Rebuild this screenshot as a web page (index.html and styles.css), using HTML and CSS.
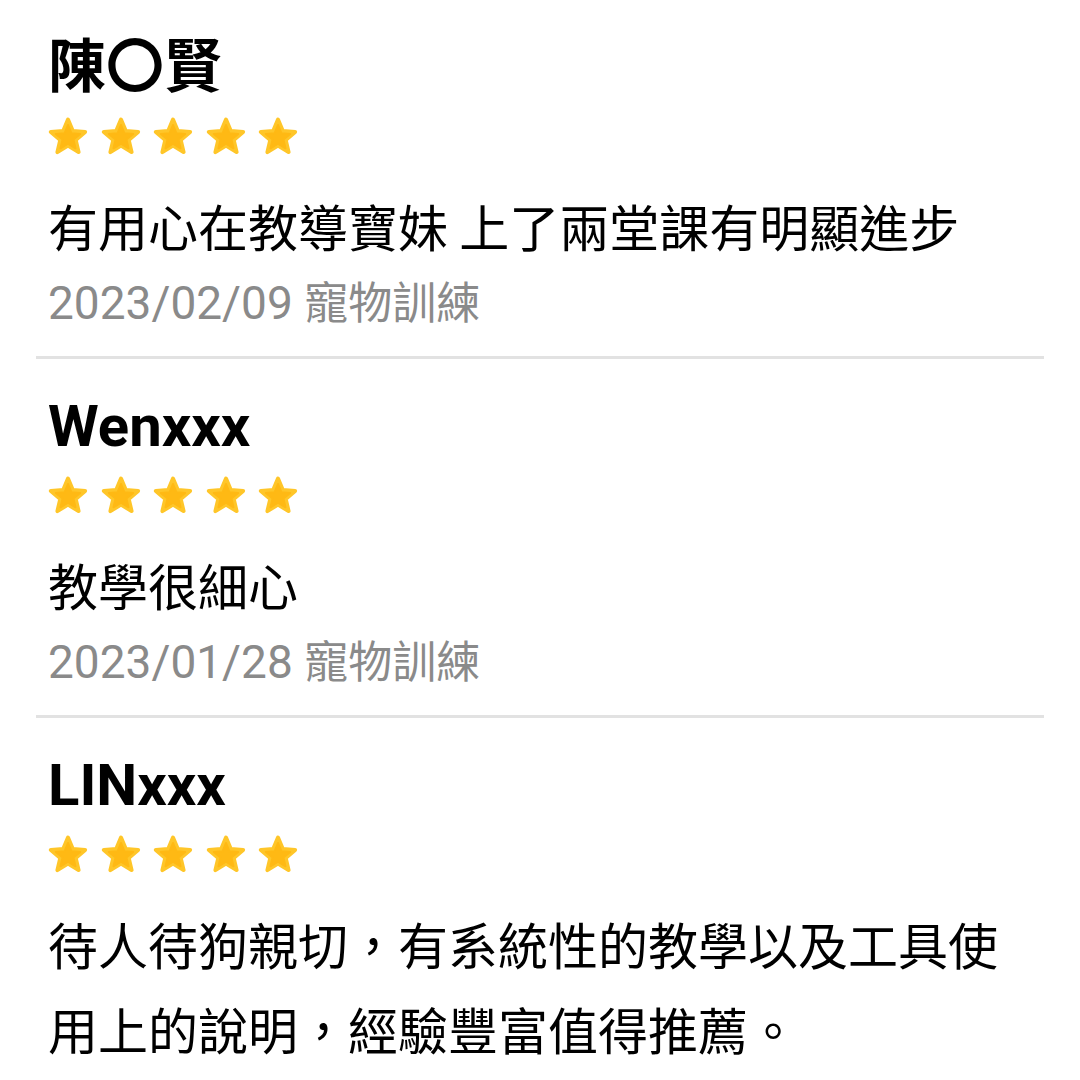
FILE: index.html
```html
<!DOCTYPE html>
<html lang="zh-Hant">
<head>
<meta charset="utf-8">
<title>評價</title>
<link rel="stylesheet" href="styles.css">
</head>
<body>
<svg width="0" height="0" class="defs">
  <defs>
    <g id="star">
      <polygon points="20,2.5 24.8,14 37.1,14.9 27.7,23 30.6,35.1 20,28.6 9.4,35.1 12.3,23 2.9,14.9 15.2,14" fill="#FFC629" stroke="#FFC629" stroke-width="4" stroke-linejoin="round"/>
      <polygon points="20,8 23.4,16.2 32.2,16.9 25.5,22.6 27.5,31.3 20,26.6 12.5,31.3 14.5,22.6 7.8,16.9 16.6,16.2" fill="#FFB914" stroke="#FFB914" stroke-width="2" stroke-linejoin="round"/>
    </g>
  </defs>
</svg>
<div class="list">
  <div class="entry">
    <div class="name">陳〇賢</div>
    <div class="stars">
      <svg class="star" viewBox="0 0 40 38"><use href="#star"/></svg>
      <svg class="star" viewBox="0 0 40 38"><use href="#star"/></svg>
      <svg class="star" viewBox="0 0 40 38"><use href="#star"/></svg>
      <svg class="star" viewBox="0 0 40 38"><use href="#star"/></svg>
      <svg class="star" viewBox="0 0 40 38"><use href="#star"/></svg>
    </div>
    <div class="comment">有用心在教導寶妹 上了兩堂課有明顯進步</div>
    <div class="date"><span class="day">2023/02/09</span> <span class="cat">寵物訓練</span></div>
  </div>
  <div class="entry">
    <div class="name">Wenxxx</div>
    <div class="stars">
      <svg class="star" viewBox="0 0 40 38"><use href="#star"/></svg>
      <svg class="star" viewBox="0 0 40 38"><use href="#star"/></svg>
      <svg class="star" viewBox="0 0 40 38"><use href="#star"/></svg>
      <svg class="star" viewBox="0 0 40 38"><use href="#star"/></svg>
      <svg class="star" viewBox="0 0 40 38"><use href="#star"/></svg>
    </div>
    <div class="comment">教學很細心</div>
    <div class="date"><span class="day">2023/01/28</span> <span class="cat">寵物訓練</span></div>
  </div>
  <div class="entry entry-last">
    <div class="name">LINxxx</div>
    <div class="stars">
      <svg class="star" viewBox="0 0 40 38"><use href="#star"/></svg>
      <svg class="star" viewBox="0 0 40 38"><use href="#star"/></svg>
      <svg class="star" viewBox="0 0 40 38"><use href="#star"/></svg>
      <svg class="star" viewBox="0 0 40 38"><use href="#star"/></svg>
      <svg class="star" viewBox="0 0 40 38"><use href="#star"/></svg>
    </div>
    <div class="comment">待人待狗親切，有系統性的教學以及工具使用上的說明，經驗豐富值得推薦。</div>
  </div>
</div>
</body>
</html>
```

FILE: styles.css
```css
html, body {
  margin: 0;
  padding: 0;
  background: #ffffff;
}

body {
  width: 1080px;
  height: 1080px;
  overflow: hidden;
}

.defs {
  position: absolute;
  width: 0;
  height: 0;
}

.list {
  display: flex;
  flex-direction: column;
  margin: 0 36px;
}

.entry {
  padding: 0 40px 25px 12px;
  border-bottom: 3px solid #e2e2e2;
}

.entry-last {
  padding-bottom: 0;
  border-bottom: none;
}

.name {
  font-family: Roboto, "Noto Sans CJK TC", sans-serif;
  font-weight: 700;
  font-size: 58px;
  line-height: 68px;
  padding-top: 33px;
  color: #000000;
}

.stars {
  display: flex;
  gap: 12.5px;
  margin-top: 16px;
  height: 38px;
}

.star {
  width: 40px;
  height: 38px;
  display: block;
}

.comment {
  font-family: "Noto Sans CJK TC", sans-serif;
  font-size: 50px;
  line-height: 85px;
  margin-top: 28px;
  color: #000000;
}

.date {
  font-family: Roboto, "Noto Sans CJK TC", sans-serif;
  font-size: 46px;
  line-height: 54px;
  margin-top: 8px;
  color: #8a8a8a;
}

.cat {
  font-size: 44px;
}
```
